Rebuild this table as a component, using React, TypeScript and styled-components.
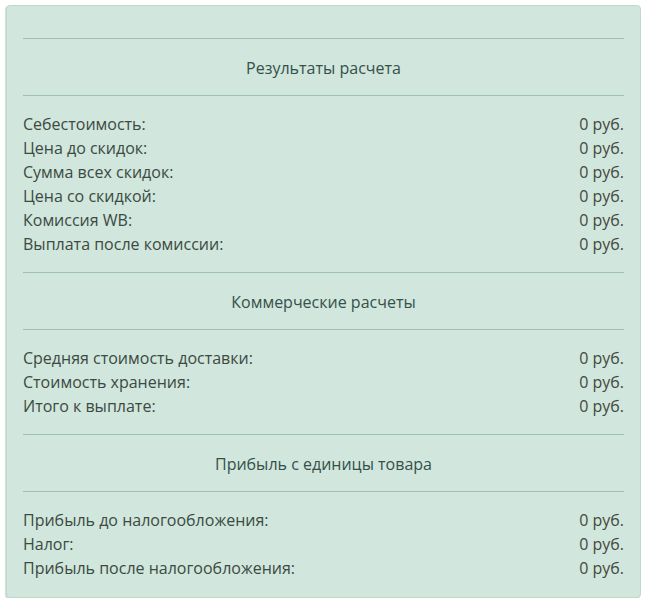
import styled, { createGlobalStyle } from "styled-components";

const GlobalStyle = createGlobalStyle`
  html, body {
    margin: 0;
    padding: 0;
    background: #fff;
  }
  body {
    padding: 5px 6px 0 6px;
    font-family: "Open Sans", "Liberation Sans", sans-serif;
  }
`;

const Panel = styled.div`
  background: #d1e6dc;
  border: 1px solid #bfd8cb;
  border-radius: 4px;
  box-shadow: -1px 1px 1px rgba(120, 160, 140, 0.35);
  padding: 32px 16px 1px 16px;
  width: 635px;
  box-sizing: border-box;
`;

const Divider = styled.hr`
  border: 0;
  border-top: 1px solid #9cc1ae;
  margin: 0;
  height: 0;
`;

const Title = styled.div`
  text-align: center;
  font-size: 16px;
  line-height: 24px;
  color: #36504a;
  padding: 17px 0 15px;
`;

const Rows = styled.div`
  display: flex;
  flex-direction: column;
  padding: 16px 0;
`;

const Row = styled.div`
  display: flex;
  justify-content: space-between;
  font-size: 16px;
  line-height: 24px;
  color: #3b4a42;
`;

const Value = styled.span`
  color: #43493f;
`;

type Section = { title: string; rows: string[] };

const sections: Section[] = [
  {
    title: "Результаты расчета",
    rows: [
      "Себестоимость:",
      "Цена до скидок:",
      "Сумма всех скидок:",
      "Цена со скидкой:",
      "Комиссия WB:",
      "Выплата после комиссии:",
    ],
  },
  {
    title: "Коммерческие расчеты",
    rows: ["Средняя стоимость доставки:", "Стоимость хранения:", "Итого к выплате:"],
  },
  {
    title: "Прибыль с единицы товара",
    rows: ["Прибыль до налогообложения:", "Налог:", "Прибыль после налогообложения:"],
  },
];

const App = () => {
  return (
    <>
      <GlobalStyle />
      <Panel>
        {sections.map((s) => (
          <div key={s.title}>
            <Divider />
            <Title>{s.title}</Title>
            <Divider />
            <Rows>
              {s.rows.map((r) => (
                <Row key={r}>
                  <span>{r}</span>
                  <Value>0 руб.</Value>
                </Row>
              ))}
            </Rows>
          </div>
        ))}
      </Panel>
    </>
  );
};

export default App;
